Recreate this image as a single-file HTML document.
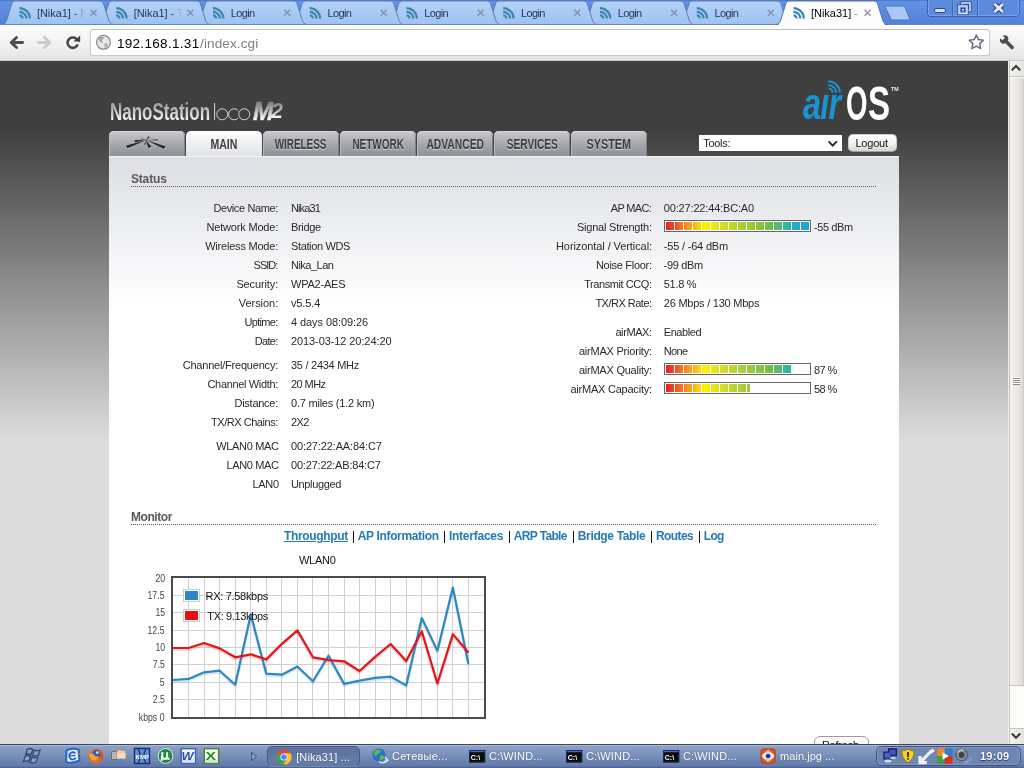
<!DOCTYPE html>
<html><head><meta charset="utf-8"><title>[Nika31] - Main</title>
<style>
*{margin:0;padding:0;box-sizing:border-box}
html,body{width:1024px;height:768px;overflow:hidden;background:#dcdcdc;font-family:"Liberation Sans",sans-serif;font-size:11px;color:#222}
.t{position:absolute;white-space:nowrap;line-height:20px;height:20px;font-family:"Liberation Sans",sans-serif}
#pc,#chromewrap,#taskwrap{will-change:transform}
.dot{position:absolute;height:1px;background:repeating-linear-gradient(90deg,#5a5a5a 0,#5a5a5a 1px,transparent 1px,transparent 2px)}
.navt{position:absolute;height:17px;line-height:17px;text-align:center;font-size:14px;font-weight:bold;color:#3d3d40;text-shadow:0 1px 0 rgba(255,255,255,.55);white-space:nowrap}
#page{position:absolute;left:0;top:61px;width:1008px;height:683px;overflow:hidden}
#pc{position:absolute;left:0;top:-61px;width:1008px;height:768px;background:linear-gradient(#3f3f3f 0,#3f3f3f 130px,#dcdcdc 440px,#dcdcdc 100%)}
</style></head><body>
<div id="page"><div id="pc">
<div style="position:absolute;left:109px;top:156px;width:790px;height:640px;background:linear-gradient(#dee0e5,#dfe1e6 12px,#ffffff 148px,#ffffff)"></div>
<div style="position:absolute;left:109px;top:131px;width:76px;height:25px;border-radius:5px 5px 0 0;background:linear-gradient(#c9cacc,#b4b6ba 30%,#9fa2a8 65%,#8e9299);box-shadow:inset 0 1px 0 #d4d5d7,inset -1px 0 0 #7e8187,inset 1px 0 0 #b9bbbf"></div>
<div style="position:absolute;left:186px;top:131px;width:76px;height:26px;border-radius:5px 5px 0 0;background:linear-gradient(#ffffff,#f4f5f7 30%,#dfe1e6)"></div>
<div class="navt" style="left:164.15px;top:136px;width:120px"><span style="display:inline-block;transform:scaleX(0.754);">MAIN</span></div>
<div style="position:absolute;left:263px;top:131px;width:76px;height:25px;border-radius:5px 5px 0 0;background:linear-gradient(#c9cacc,#b4b6ba 30%,#9fa2a8 65%,#8e9299);box-shadow:inset 0 1px 0 #d4d5d7,inset -1px 0 0 #7e8187,inset 1px 0 0 #b9bbbf"></div>
<div class="navt" style="left:240.75px;top:136px;width:120px"><span style="display:inline-block;transform:scaleX(0.708);">WIRELESS</span></div>
<div style="position:absolute;left:340px;top:131px;width:76px;height:25px;border-radius:5px 5px 0 0;background:linear-gradient(#c9cacc,#b4b6ba 30%,#9fa2a8 65%,#8e9299);box-shadow:inset 0 1px 0 #d4d5d7,inset -1px 0 0 #7e8187,inset 1px 0 0 #b9bbbf"></div>
<div class="navt" style="left:318.25px;top:136px;width:120px"><span style="display:inline-block;transform:scaleX(0.713);">NETWORK</span></div>
<div style="position:absolute;left:417px;top:131px;width:76px;height:25px;border-radius:5px 5px 0 0;background:linear-gradient(#c9cacc,#b4b6ba 30%,#9fa2a8 65%,#8e9299);box-shadow:inset 0 1px 0 #d4d5d7,inset -1px 0 0 #7e8187,inset 1px 0 0 #b9bbbf"></div>
<div class="navt" style="left:395.25px;top:136px;width:120px"><span style="display:inline-block;transform:scaleX(0.735);">ADVANCED</span></div>
<div style="position:absolute;left:494px;top:131px;width:76px;height:25px;border-radius:5px 5px 0 0;background:linear-gradient(#c9cacc,#b4b6ba 30%,#9fa2a8 65%,#8e9299);box-shadow:inset 0 1px 0 #d4d5d7,inset -1px 0 0 #7e8187,inset 1px 0 0 #b9bbbf"></div>
<div class="navt" style="left:472.00px;top:136px;width:120px"><span style="display:inline-block;transform:scaleX(0.726);">SERVICES</span></div>
<div style="position:absolute;left:571px;top:131px;width:76px;height:25px;border-radius:5px 5px 0 0;background:linear-gradient(#c9cacc,#b4b6ba 30%,#9fa2a8 65%,#8e9299);box-shadow:inset 0 1px 0 #d4d5d7,inset -1px 0 0 #7e8187,inset 1px 0 0 #b9bbbf"></div>
<div class="navt" style="left:549.15px;top:136px;width:120px"><span style="display:inline-block;transform:scaleX(0.771);">SYSTEM</span></div>
<svg style="position:absolute;left:124px;top:134px" width="44" height="18" viewBox="0 0 44 18">
<g fill="#e9eaec" opacity="0.9"><polygon points="1.6,13.6 4.4,14.6 6.5,13.4 3,13.2"/><polygon points="38.5,14 41.8,14.6 42,13.4"/><polygon points="24.6,13.6 27.6,13.9 27.4,12.9"/></g>
<g fill="#232325"><polygon points="23,5.800 2,11.800 3.400,14.200"/><polygon points="21.600,5.800 41.600,12.400 40,14.700"/>
<polygon points="22.400,5.400 10.400,6.200 11,8.200"/><polygon points="21.2,10.8 20,10.4 22.3,6.2"/><polygon points="21.800,6 24.300,13.700 27.600,13"/><polygon points="22,6.3 24.3,2.3 25.6,3.2"/></g>
<g fill="#5e6064"><polygon points="22,5.9 34,4.9 34.2,6.7"/><polygon points="22.3,6.2 17,3.8 17.3,5.200"/></g></svg>
<div style="position:absolute;left:109px;top:156px;width:790px;height:1px;background:#f4f5f7"></div>
<div style="position:absolute;left:110px;top:97px;height:30px;line-height:30px;font-size:24px;font-weight:bold;white-space:nowrap;transform-origin:0 0;transform:scaleX(.708);background:linear-gradient(#9c9c9c 22%,#ffffff 82%);-webkit-background-clip:text;background-clip:text;color:transparent">NanoStation</div>
<svg style="position:absolute;left:212px;top:100px" width="42" height="24" viewBox="0 0 42 24"><g fill="none" stroke="#e4e4e4" stroke-width="0.9"><line x1="2.6" y1="3" x2="2.6" y2="20"/><circle cx="10.3" cy="14.3" r="5.5"/><path d="M26.2,10.6 A5.5,5.5 0 1 0 26.2,18"/><circle cx="32.3" cy="14.3" r="5.5"/></g></svg>
<div style="position:absolute;left:253px;top:96px;height:30px;line-height:30px;font-size:25px;font-weight:bold;font-style:italic;white-space:nowrap;transform-origin:0 0;transform:scaleX(.98);background:linear-gradient(#858585 25%,#ffffff 80%);-webkit-background-clip:text;background-clip:text;color:transparent;-webkit-text-stroke:0.6px transparent">M</div>
<div style="position:absolute;left:271.200px;top:95.500px;height:30px;line-height:30px;font-size:22.5px;font-weight:bold;font-style:italic;white-space:nowrap;transform-origin:0 0;transform:scaleX(.96);background:linear-gradient(#858585 25%,#f4f4f4 72%);-webkit-background-clip:text;background-clip:text;color:transparent">2</div>
<div style="position:absolute;left:803px;top:76px;height:56px;line-height:56px;font-size:45px;font-weight:bold;font-style:italic;white-space:nowrap;transform-origin:0 0;transform:scaleX(.72);color:#1b93d1;letter-spacing:-1px">a&#305;r</div>
<div style="position:absolute;left:845.6px;top:76px;height:56px;line-height:56px;font-size:48px;font-weight:bold;white-space:nowrap;transform-origin:0 0;transform:scaleX(.575);color:#ffffff">O</div>
<div style="position:absolute;left:868px;top:76px;height:56px;line-height:56px;font-size:48px;font-weight:bold;white-space:nowrap;transform-origin:0 0;transform:scaleX(.69);color:#ffffff">S</div>
<div style="position:absolute;left:891px;top:86px;font-size:5px;line-height:6px;font-weight:bold;color:#eee;transform-origin:0 0;transform:scaleX(1.05)">TM</div>
<svg style="position:absolute;left:824px;top:78px" width="20" height="18" viewBox="0 0 20 18"><g fill="none" stroke="#1b93d1" stroke-width="2"><path d="M4.5,10.6 A4.2,4.2 0 0 1 8.6,14.6"/><path d="M4.3,6.9 A8,8 0 0 1 12.2,14.6"/><path d="M4.2,3.2 A11.6,11.6 0 0 1 15.8,14.4"/></g></svg>
<div style="position:absolute;left:698px;top:134px;width:145px;height:18px;background:#fff;border:1px solid #4a4a4a"></div>
<span class="t" style="left:703.30px;top:133px;font-size:11px;color:#222;letter-spacing:-0.316px;">Tools:</span>
<svg style="position:absolute;left:826px;top:138px" width="14" height="12" viewBox="0 0 14 12"><path d="M2.6,3.4 L6.7,7.6 L10.8,3.4" fill="none" stroke="#2a2a2a" stroke-width="2"/></svg>
<div style="position:absolute;left:848px;top:134px;width:49px;height:18px;border-radius:5px;border:1px solid #cfcdc7;border-bottom-color:#a5a29b;background:linear-gradient(#ffffff,#f4f3f0 50%,#d9d6cf)"></div>
<span class="t" style="left:855.40px;top:133px;font-size:11px;color:#111;letter-spacing:-0.198px;">Logout</span>
<span class="t" style="left:130.90px;top:169px;font-size:12px;color:#57575c;letter-spacing:-0.140px;font-weight:700;">Status</span>
<div class="dot" style="left:131px;top:186px;width:746px"></div>
<span class="t" style="left:130.90px;top:507px;font-size:12px;color:#57575c;letter-spacing:-0.419px;font-weight:700;">Monitor</span>
<div class="dot" style="left:131px;top:524px;width:746px"></div>
<span class="t" style="left:213.40px;top:198px;font-size:11px;color:#2a2a2a;letter-spacing:-0.384px;">Device Name:</span>
<span class="t" style="left:291.00px;top:198px;font-size:11px;color:#2a2a2a;letter-spacing:-0.885px;">Nika31</span>
<span class="t" style="left:206.50px;top:217px;font-size:11px;color:#2a2a2a;letter-spacing:-0.185px;">Network Mode:</span>
<span class="t" style="left:291.00px;top:217px;font-size:11px;color:#2a2a2a;letter-spacing:-0.316px;">Bridge</span>
<span class="t" style="left:205.20px;top:236px;font-size:11px;color:#2a2a2a;letter-spacing:-0.211px;">Wireless Mode:</span>
<span class="t" style="left:291.00px;top:236px;font-size:11px;color:#2a2a2a;letter-spacing:-0.363px;">Station WDS</span>
<span class="t" style="left:253.60px;top:255px;font-size:11px;color:#2a2a2a;letter-spacing:-1.018px;">SSID:</span>
<span class="t" style="left:291.00px;top:255px;font-size:11px;color:#2a2a2a;letter-spacing:-0.508px;">Nika_Lan</span>
<span class="t" style="left:236.40px;top:274px;font-size:11px;color:#2a2a2a;letter-spacing:-0.117px;">Security:</span>
<span class="t" style="left:291.00px;top:274px;font-size:11px;color:#2a2a2a;letter-spacing:-0.213px;">WPA2-AES</span>
<span class="t" style="left:238.75px;top:293px;font-size:11px;color:#2a2a2a;letter-spacing:-0.034px;">Version:</span>
<span class="t" style="left:291.00px;top:293px;font-size:11px;color:#2a2a2a;letter-spacing:-0.130px;">v5.5.4</span>
<span class="t" style="left:244.60px;top:312px;font-size:11px;color:#2a2a2a;letter-spacing:-0.707px;">Uptime:</span>
<span class="t" style="left:291.00px;top:312px;font-size:11px;color:#2a2a2a;letter-spacing:-0.083px;">4 days 08:09:26</span>
<span class="t" style="left:254.80px;top:331px;font-size:11px;color:#2a2a2a;letter-spacing:-0.709px;">Date:</span>
<span class="t" style="left:291.00px;top:331px;font-size:11px;color:#2a2a2a;letter-spacing:-0.090px;">2013-03-12 20:24:20</span>
<span class="t" style="left:182.70px;top:355px;font-size:11px;color:#2a2a2a;letter-spacing:-0.206px;">Channel/Frequency:</span>
<span class="t" style="left:291.00px;top:355px;font-size:11px;color:#2a2a2a;letter-spacing:-0.270px;">35 / 2434 MHz</span>
<span class="t" style="left:207.50px;top:374px;font-size:11px;color:#2a2a2a;letter-spacing:-0.342px;">Channel Width:</span>
<span class="t" style="left:291.00px;top:374px;font-size:11px;color:#2a2a2a;letter-spacing:-0.560px;">20 MHz</span>
<span class="t" style="left:234.50px;top:393px;font-size:11px;color:#2a2a2a;letter-spacing:-0.262px;">Distance:</span>
<span class="t" style="left:291.00px;top:393px;font-size:11px;color:#2a2a2a;letter-spacing:-0.220px;">0.7 miles (1.2 km)</span>
<span class="t" style="left:211.00px;top:412px;font-size:11px;color:#2a2a2a;letter-spacing:-0.457px;">TX/RX Chains:</span>
<span class="t" style="left:291.00px;top:412px;font-size:11px;color:#2a2a2a;letter-spacing:-0.627px;">2X2</span>
<span class="t" style="left:216.30px;top:436px;font-size:11px;color:#2a2a2a;letter-spacing:-0.344px;">WLAN0 MAC</span>
<span class="t" style="left:291.00px;top:436px;font-size:11px;color:#2a2a2a;letter-spacing:-0.134px;">00:27:22:AA:84:C7</span>
<span class="t" style="left:226.60px;top:455px;font-size:11px;color:#2a2a2a;letter-spacing:-0.382px;">LAN0 MAC</span>
<span class="t" style="left:291.00px;top:455px;font-size:11px;color:#2a2a2a;letter-spacing:-0.196px;">00:27:22:AB:84:C7</span>
<span class="t" style="left:252.40px;top:474px;font-size:11px;color:#2a2a2a;letter-spacing:-0.266px;">LAN0</span>
<span class="t" style="left:291.00px;top:474px;font-size:11px;color:#2a2a2a;letter-spacing:-0.355px;">Unplugged</span>
<span class="t" style="left:610.70px;top:198px;font-size:11px;color:#2a2a2a;letter-spacing:-0.646px;">AP MAC:</span>
<span class="t" style="left:663.80px;top:198px;font-size:11px;color:#2a2a2a;letter-spacing:-0.165px;">00:27:22:44:BC:A0</span>
<span class="t" style="left:576.90px;top:217px;font-size:11px;color:#2a2a2a;letter-spacing:-0.208px;">Signal Strength:</span>
<span class="t" style="left:556.00px;top:236px;font-size:11px;color:#2a2a2a;letter-spacing:-0.084px;">Horizontal / Vertical:</span>
<span class="t" style="left:663.80px;top:236px;font-size:11px;color:#2a2a2a;letter-spacing:-0.190px;">-55 / -64 dBm</span>
<span class="t" style="left:595.90px;top:255px;font-size:11px;color:#2a2a2a;letter-spacing:-0.286px;">Noise Floor:</span>
<span class="t" style="left:663.80px;top:255px;font-size:11px;color:#2a2a2a;letter-spacing:-0.368px;">-99 dBm</span>
<span class="t" style="left:584.15px;top:274px;font-size:11px;color:#2a2a2a;letter-spacing:-0.419px;">Transmit CCQ:</span>
<span class="t" style="left:663.80px;top:274px;font-size:11px;color:#2a2a2a;letter-spacing:-0.313px;">51.8 %</span>
<span class="t" style="left:595.40px;top:293px;font-size:11px;color:#2a2a2a;letter-spacing:-0.508px;">TX/RX Rate:</span>
<span class="t" style="left:663.80px;top:293px;font-size:11px;color:#2a2a2a;letter-spacing:-0.233px;">26 Mbps / 130 Mbps</span>
<span class="t" style="left:615.40px;top:322px;font-size:11px;color:#2a2a2a;letter-spacing:-0.410px;">airMAX:</span>
<span class="t" style="left:663.80px;top:322px;font-size:11px;color:#2a2a2a;letter-spacing:-0.442px;">Enabled</span>
<span class="t" style="left:578.90px;top:341px;font-size:11px;color:#2a2a2a;letter-spacing:-0.216px;">airMAX Priority:</span>
<span class="t" style="left:663.80px;top:341px;font-size:11px;color:#2a2a2a;letter-spacing:-0.660px;">None</span>
<span class="t" style="left:578.90px;top:360px;font-size:11px;color:#2a2a2a;letter-spacing:-0.232px;">airMAX Quality:</span>
<span class="t" style="left:570.40px;top:379px;font-size:11px;color:#2a2a2a;letter-spacing:-0.221px;">airMAX Capacity:</span>
<span class="t" style="left:814.00px;top:217px;font-size:11px;color:#2a2a2a;letter-spacing:-0.402px;">-55 dBm</span>
<span class="t" style="left:814.00px;top:360px;font-size:11px;color:#2a2a2a;letter-spacing:-0.631px;">87 %</span>
<span class="t" style="left:814.00px;top:379px;font-size:11px;color:#2a2a2a;letter-spacing:-0.631px;">58 %</span>
<div style="position:absolute;left:664px;top:220px;width:147px;height:12px;border:1px solid #666;background:#fff"><div style="position:absolute;left:1px;top:1px;width:144px;height:8px;background:linear-gradient(90deg,#ee1c25 0,#f04e23 9px,#f58220 18px,#fcb316 28px,#fff200 38px,#e4e61c 50px,#cbdb2a 60px,#a8cf38 76px,#8bc53f 92px,#6fbe44 104px,#4db97f 115px,#2bb4ae 124px,#1faacf 133px,#1da0dc 144px);background-size:144px 8px;background-repeat:no-repeat"></div><div style="position:absolute;left:1px;top:1px;width:144px;height:8px;background:repeating-linear-gradient(90deg,transparent 0,transparent 8px,#fff 8px,#fff 9px)"></div></div>
<div style="position:absolute;left:664px;top:363px;width:147px;height:12px;border:1px solid #666;background:#fff"><div style="position:absolute;left:1px;top:1px;width:125px;height:8px;background:linear-gradient(90deg,#ee1c25 0,#f04e23 9px,#f58220 18px,#fcb316 28px,#fff200 38px,#e4e61c 50px,#cbdb2a 60px,#a8cf38 76px,#8bc53f 92px,#6fbe44 104px,#4db97f 115px,#2bb4ae 124px,#1faacf 133px,#1da0dc 144px);background-size:144px 8px;background-repeat:no-repeat"></div><div style="position:absolute;left:1px;top:1px;width:144px;height:8px;background:repeating-linear-gradient(90deg,transparent 0,transparent 8px,#fff 8px,#fff 9px)"></div></div>
<div style="position:absolute;left:664px;top:382px;width:147px;height:12px;border:1px solid #666;background:#fff"><div style="position:absolute;left:1px;top:1px;width:84px;height:8px;background:linear-gradient(90deg,#ee1c25 0,#f04e23 9px,#f58220 18px,#fcb316 28px,#fff200 38px,#e4e61c 50px,#cbdb2a 60px,#a8cf38 76px,#8bc53f 92px,#6fbe44 104px,#4db97f 115px,#2bb4ae 124px,#1faacf 133px,#1da0dc 144px);background-size:144px 8px;background-repeat:no-repeat"></div><div style="position:absolute;left:1px;top:1px;width:144px;height:8px;background:repeating-linear-gradient(90deg,transparent 0,transparent 8px,#fff 8px,#fff 9px)"></div></div>
<span class="t" style="left:283.90px;top:526px;font-size:12px;color:#257ab4;letter-spacing:-0.335px;font-weight:700;text-decoration:underline;">Throughput</span>
<span class="t" style="left:357.80px;top:526px;font-size:12px;color:#257ab4;letter-spacing:-0.351px;font-weight:700;">AP Information</span>
<span class="t" style="left:448.90px;top:526px;font-size:12px;color:#257ab4;letter-spacing:-0.236px;font-weight:700;">Interfaces</span>
<span class="t" style="left:513.80px;top:526px;font-size:12px;color:#257ab4;letter-spacing:-0.656px;font-weight:700;">ARP Table</span>
<span class="t" style="left:577.80px;top:526px;font-size:12px;color:#257ab4;letter-spacing:-0.356px;font-weight:700;">Bridge Table</span>
<span class="t" style="left:656.00px;top:526px;font-size:12px;color:#257ab4;letter-spacing:-0.599px;font-weight:700;">Routes</span>
<span class="t" style="left:703.80px;top:526px;font-size:12px;color:#257ab4;letter-spacing:-0.730px;font-weight:700;">Log</span>
<div style="position:absolute;left:352.8px;top:531px;width:1px;height:12px;background:#111"></div>
<div style="position:absolute;left:443.8px;top:531px;width:1px;height:12px;background:#111"></div>
<div style="position:absolute;left:508.8px;top:531px;width:1px;height:12px;background:#111"></div>
<div style="position:absolute;left:572.8px;top:531px;width:1px;height:12px;background:#111"></div>
<div style="position:absolute;left:650.9px;top:531px;width:1px;height:12px;background:#111"></div>
<div style="position:absolute;left:698.5px;top:531px;width:1px;height:12px;background:#111"></div>
<svg style="position:absolute;left:0;top:0" width="1008" height="768" viewBox="0 0 1008 768">
<rect x="171" y="576" width="315" height="142" fill="#fff"/>
<path d="M188.5,578V717M204.5,578V717M219.5,578V717M235.5,578V717M250.5,578V717M266.5,578V717M281.5,578V717M297.5,578V717M312.5,578V717M328.5,578V717M344.5,578V717M359.5,578V717M375.5,578V717M390.5,578V717M406.5,578V717M421.5,578V717M437.5,578V717M452.5,578V717M468.5,578V717M173,595.5H484M173,612.5H484M173,630.5H484M173,647.5H484M173,664.5H484M173,682.5H484M173,699.5H484" stroke="#d0d0d0" stroke-width="1" fill="none"/>
<polyline points="173.0,681.5 188.6,680.4 204.1,673.8 219.7,672.2 235.2,686.2 250.8,615.9 266.3,675.2 281.9,676.2 297.4,668.0 313.0,682.7 328.5,657.1 344.1,685.4 359.6,682.1 375.1,679.4 390.7,678.1 406.2,686.9 421.8,619.5 437.4,652.2 452.9,589.1 468.4,665.5" fill="none" stroke="#2f87c2" stroke-opacity="0.18" stroke-width="3" stroke-linejoin="round"/>
<polyline points="173.0,649.5 188.6,649.5 204.1,644.5 219.7,649.9 235.2,658.8 250.8,655.8 266.3,660.9 281.9,645.2 297.4,631.9 313.0,658.8 328.5,661.7 344.1,662.8 359.6,672.5 375.1,658.4 390.7,645.5 406.2,662.6 421.8,632.7 437.4,685.0 452.9,635.6 468.4,654.0" fill="none" stroke="#e1151b" stroke-opacity="0.18" stroke-width="3" stroke-linejoin="round"/>
<polyline points="173.0,680.0 188.6,678.9 204.1,672.3 219.7,670.7 235.2,684.8 250.8,614.4 266.3,673.7 281.9,674.7 297.4,666.5 313.0,681.2 328.5,655.6 344.1,683.9 359.6,680.6 375.1,677.9 390.7,676.6 406.2,685.4 421.8,618.0 437.4,650.7 452.9,587.6 468.4,664.0" fill="none" stroke="#2f87c2" stroke-width="2.2" stroke-linejoin="round"/>
<polyline points="173.0,648.0 188.6,648.0 204.1,643.0 219.7,648.4 235.2,657.3 250.8,654.3 266.3,659.4 281.9,643.8 297.4,630.4 313.0,657.3 328.5,660.2 344.1,661.3 359.6,671.0 375.1,656.9 390.7,644.0 406.2,661.1 421.8,631.2 437.4,683.5 452.9,634.1 468.4,652.5" fill="none" stroke="#e1151b" stroke-width="2.2" stroke-linejoin="round"/>
<rect x="172" y="577" width="313" height="141" fill="none" stroke="#4a4a4a" stroke-width="2"/>
<rect x="183.5" y="589.5" width="16" height="12" fill="#fff" stroke="#ccc"/><rect x="185" y="591" width="13" height="9" fill="#2f87c2"/>
<rect x="183.5" y="609.5" width="16" height="12" fill="#fff" stroke="#ccc"/><rect x="185" y="611" width="13" height="9" fill="#ee0d0d"/>
</svg>
<span class="t" style="left:205.60px;top:586px;font-size:11px;color:#111;letter-spacing:-0.313px;">RX: 7.58kbps</span>
<span class="t" style="left:207.30px;top:606px;font-size:11px;color:#111;letter-spacing:-0.356px;">TX: 9.13kbps</span>
<span class="t" style="left:298.90px;top:550px;font-size:11px;color:#111;letter-spacing:-0.220px;">WLAN0</span>
<span class="t" style="right:843.2px;top:569px;font-size:10px;color:#444;transform:scaleX(.87);transform-origin:100% 50%">20</span>
<span class="t" style="right:843.2px;top:586px;font-size:10px;color:#444;transform:scaleX(.87);transform-origin:100% 50%">17.5</span>
<span class="t" style="right:843.2px;top:603px;font-size:10px;color:#444;transform:scaleX(.87);transform-origin:100% 50%">15</span>
<span class="t" style="right:843.2px;top:621px;font-size:10px;color:#444;transform:scaleX(.87);transform-origin:100% 50%">12.5</span>
<span class="t" style="right:843.2px;top:638px;font-size:10px;color:#444;transform:scaleX(.87);transform-origin:100% 50%">10</span>
<span class="t" style="right:843.2px;top:655px;font-size:10px;color:#444;transform:scaleX(.87);transform-origin:100% 50%">7.5</span>
<span class="t" style="right:843.2px;top:673px;font-size:10px;color:#444;transform:scaleX(.87);transform-origin:100% 50%">5</span>
<span class="t" style="right:843.2px;top:690px;font-size:10px;color:#444;transform:scaleX(.87);transform-origin:100% 50%">2.5</span>
<span class="t" style="right:843.2px;top:708px;font-size:10px;color:#444;transform:scaleX(.87);transform-origin:100% 50%">kbps 0</span>
<div style="position:absolute;left:814px;top:736px;width:55px;height:20px;border-radius:6px;border:1px solid #9c9c9c;background:linear-gradient(#fdfdfc,#ecebe8)"></div>
<span class="t" style="left:821.90px;top:735px;font-size:11px;color:#111;letter-spacing:-0.216px;">Refresh</span>
</div></div>
<div style="position:absolute;left:1008px;top:61px;width:16px;height:683px;background:#fbfbfa"></div>
<div style="position:absolute;left:1008px;top:61px;width:1px;height:683px;background:#f1f1f0"></div>
<div style="position:absolute;left:1009px;top:61px;width:1px;height:683px;background:#c4c1bc"></div>
<div style="position:absolute;left:1010px;top:61px;width:14px;height:16px;background:linear-gradient(90deg,#f4f3f0,#e6e4df);border-bottom:1px solid #c6c3bd"></div>
<div style="position:absolute;left:1010px;top:78px;width:14px;height:608px;background:linear-gradient(90deg,#f6f4f1,#ebe9e5 50%,#dedbd6);border-bottom:1px solid #c6c3bd;border-right:1px solid #cfccc6"></div>
<div style="position:absolute;left:1010px;top:728px;width:14px;height:16px;background:linear-gradient(90deg,#f4f3f0,#e6e4df);border-top:1px solid #c6c3bd"></div>
<svg style="position:absolute;left:1008px;top:61px" width="16" height="683" viewBox="0 0 16 683"><path d="M3.800,9.200 L8,5 L12.200,9.200 M3.800,672.500 L8,676.700 L12.200,672.500" fill="none" stroke="#3e3e3e" stroke-width="2.200"/><path d="M5,317.500H12M5,319.500H12M5,321.500H12M5,323.500H12" stroke="#8c8984" stroke-width="1"/><path d="M5,316.500H12M5,318.500H12M5,320.500H12M5,322.500H12" stroke="#ffffff" stroke-width="1"/></svg>
<div id="chromewrap" style="position:absolute;left:0;top:0;width:1024px;height:61px">
<svg style="position:absolute;left:0;top:0" width="1024" height="26" viewBox="0 0 1024 26">
<defs><linearGradient id="fr" x1="0" y1="0" x2="0" y2="1"><stop offset="0" stop-color="#446fc4"/><stop offset="0.06" stop-color="#6092e5"/><stop offset="1" stop-color="#5281d7"/></linearGradient><linearGradient id="ti" x1="0" y1="0" x2="0" y2="1"><stop offset="0" stop-color="#b4d2f9"/><stop offset="1" stop-color="#9fc2f0"/></linearGradient><linearGradient id="ta" x1="0" y1="0" x2="0" y2="1"><stop offset="0" stop-color="#ffffff"/><stop offset="1" stop-color="#fbfcfd"/></linearGradient><linearGradient id="fade" x1="0" y1="0" x2="1" y2="0"><stop offset="0" stop-color="#a9caf4" stop-opacity="0"/><stop offset="1" stop-color="#a9caf4"/></linearGradient></defs>
<rect x="0" y="0" width="1024" height="26" fill="url(#fr)"/>
<rect x="0" y="24" width="1024" height="1" fill="#6f92cf"/>
<path d="M678.95,24.5 C681.95,24.5 683.0500000000001,22.5 684.0500000000001,20 L688.95,4 C689.6500000000001,2 690.75,1 692.95,1 L776.95,1 C779.1500000000001,1 780.25,2 780.95,4 L785.85,20 C786.85,22.5 787.95,24.5 790.95,24.5 Z" fill="url(#ti)" stroke="#5f7fb5" stroke-width="1"/>
<path d="M582.2,24.5 C585.2,24.5 586.3000000000001,22.5 587.3000000000001,20 L592.2,4 C592.9000000000001,2 594.0,1 596.2,1 L680.2,1 C682.4000000000001,1 683.5,2 684.2,4 L689.1,20 C690.1,22.5 691.2,24.5 694.2,24.5 Z" fill="url(#ti)" stroke="#5f7fb5" stroke-width="1"/>
<path d="M485.45,24.5 C488.45,24.5 489.55,22.5 490.55,20 L495.45,4 C496.15,2 497.25,1 499.45,1 L583.45,1 C585.65,1 586.75,2 587.45,4 L592.35,20 C593.35,22.5 594.45,24.5 597.45,24.5 Z" fill="url(#ti)" stroke="#5f7fb5" stroke-width="1"/>
<path d="M388.7,24.5 C391.7,24.5 392.8,22.5 393.8,20 L398.7,4 C399.4,2 400.5,1 402.7,1 L486.7,1 C488.9,1 490.0,2 490.7,4 L495.6,20 C496.6,22.5 497.7,24.5 500.7,24.5 Z" fill="url(#ti)" stroke="#5f7fb5" stroke-width="1"/>
<path d="M291.95,24.5 C294.95,24.5 296.05,22.5 297.05,20 L301.95,4 C302.65,2 303.75,1 305.95,1 L389.95,1 C392.15,1 393.25,2 393.95,4 L398.85,20 C399.85,22.5 400.95,24.5 403.95,24.5 Z" fill="url(#ti)" stroke="#5f7fb5" stroke-width="1"/>
<path d="M195.2,24.5 C198.2,24.5 199.29999999999998,22.5 200.29999999999998,20 L205.2,4 C205.89999999999998,2 207.0,1 209.2,1 L293.2,1 C295.4,1 296.5,2 297.2,4 L302.1,20 C303.1,22.5 304.2,24.5 307.2,24.5 Z" fill="url(#ti)" stroke="#5f7fb5" stroke-width="1"/>
<path d="M98.45,24.5 C101.45,24.5 102.55,22.5 103.55,20 L108.45,4 C109.15,2 110.25,1 112.45,1 L196.45,1 C198.65,1 199.75,2 200.45,4 L205.35000000000002,20 C206.35000000000002,22.5 207.45,24.5 210.45,24.5 Z" fill="url(#ti)" stroke="#5f7fb5" stroke-width="1"/>
<path d="M1.7000000000000002,24.5 C4.7,24.5 5.800000000000001,22.5 6.800000000000001,20 L11.7,4 C12.399999999999999,2 13.5,1 15.7,1 L99.7,1 C101.9,1 103.0,2 103.7,4 L108.60000000000001,20 C109.60000000000001,22.5 110.7,24.5 113.7,24.5 Z" fill="url(#ti)" stroke="#5f7fb5" stroke-width="1"/>
<rect x="0" y="24" width="1024" height="1" fill="#6983b2"/>
<path d="M775.7,24.5 C778.7,24.5 779.8000000000001,22.5 780.8000000000001,20 L785.7,4 C786.4000000000001,2 787.5,1 789.7,1 L873.7,1 C875.9000000000001,1 877.0,2 877.7,4 L882.6,20 C883.6,22.5 884.7,24.5 887.7,24.5 Z" fill="url(#ta)" stroke="#5674a8" stroke-width="1"/>
<rect x="778.7" y="24" width="106" height="2" fill="#fdfdfe"/>
<g transform="translate(18.5,6.8)" fill="none" stroke="#3788b2" stroke-width="2.2"><path d="M1,8.6 A3.2,3.2 0 0 1 4.2,11.8"/><path d="M1,5 A6.8,6.8 0 0 1 7.8,11.8"/><path d="M1,1.3 A10.5,10.5 0 0 1 11.4,11.8"/></g>
<g transform="translate(115.25,6.8)" fill="none" stroke="#3788b2" stroke-width="2.2"><path d="M1,8.6 A3.2,3.2 0 0 1 4.2,11.8"/><path d="M1,5 A6.8,6.8 0 0 1 7.8,11.8"/><path d="M1,1.3 A10.5,10.5 0 0 1 11.4,11.8"/></g>
<g transform="translate(212.0,6.8)" fill="none" stroke="#3788b2" stroke-width="2.2"><path d="M1,8.6 A3.2,3.2 0 0 1 4.2,11.8"/><path d="M1,5 A6.8,6.8 0 0 1 7.8,11.8"/><path d="M1,1.3 A10.5,10.5 0 0 1 11.4,11.8"/></g>
<g transform="translate(308.75,6.8)" fill="none" stroke="#3788b2" stroke-width="2.2"><path d="M1,8.6 A3.2,3.2 0 0 1 4.2,11.8"/><path d="M1,5 A6.8,6.8 0 0 1 7.8,11.8"/><path d="M1,1.3 A10.5,10.5 0 0 1 11.4,11.8"/></g>
<g transform="translate(405.5,6.8)" fill="none" stroke="#3788b2" stroke-width="2.2"><path d="M1,8.6 A3.2,3.2 0 0 1 4.2,11.8"/><path d="M1,5 A6.8,6.8 0 0 1 7.8,11.8"/><path d="M1,1.3 A10.5,10.5 0 0 1 11.4,11.8"/></g>
<g transform="translate(502.25,6.8)" fill="none" stroke="#3788b2" stroke-width="2.2"><path d="M1,8.6 A3.2,3.2 0 0 1 4.2,11.8"/><path d="M1,5 A6.8,6.8 0 0 1 7.8,11.8"/><path d="M1,1.3 A10.5,10.5 0 0 1 11.4,11.8"/></g>
<g transform="translate(599.0,6.8)" fill="none" stroke="#3788b2" stroke-width="2.2"><path d="M1,8.6 A3.2,3.2 0 0 1 4.2,11.8"/><path d="M1,5 A6.8,6.8 0 0 1 7.8,11.8"/><path d="M1,1.3 A10.5,10.5 0 0 1 11.4,11.8"/></g>
<g transform="translate(695.75,6.8)" fill="none" stroke="#3788b2" stroke-width="2.2"><path d="M1,8.6 A3.2,3.2 0 0 1 4.2,11.8"/><path d="M1,5 A6.8,6.8 0 0 1 7.8,11.8"/><path d="M1,1.3 A10.5,10.5 0 0 1 11.4,11.8"/></g>
<g transform="translate(792.5,6.8)" fill="none" stroke="#3788b2" stroke-width="2.2"><path d="M1,8.6 A3.2,3.2 0 0 1 4.2,11.8"/><path d="M1,5 A6.8,6.8 0 0 1 7.8,11.8"/><path d="M1,1.3 A10.5,10.5 0 0 1 11.4,11.8"/></g>
<path d="M90.6,9.7L96.6,15.7M96.6,9.7L90.6,15.7" stroke="#8294b3" stroke-width="1.6" fill="none"/>
<path d="M187.35,9.7L193.35,15.7M193.35,9.7L187.35,15.7" stroke="#8294b3" stroke-width="1.6" fill="none"/>
<path d="M284.1,9.7L290.1,15.7M290.1,9.7L284.1,15.7" stroke="#8294b3" stroke-width="1.6" fill="none"/>
<path d="M380.85,9.7L386.85,15.7M386.85,9.7L380.85,15.7" stroke="#8294b3" stroke-width="1.6" fill="none"/>
<path d="M477.6,9.7L483.6,15.7M483.6,9.7L477.6,15.7" stroke="#8294b3" stroke-width="1.6" fill="none"/>
<path d="M574.35,9.7L580.35,15.7M580.35,9.7L574.35,15.7" stroke="#8294b3" stroke-width="1.6" fill="none"/>
<path d="M671.1,9.7L677.1,15.7M677.1,9.7L671.1,15.7" stroke="#8294b3" stroke-width="1.6" fill="none"/>
<path d="M767.85,9.7L773.85,15.7M773.85,9.7L767.85,15.7" stroke="#8294b3" stroke-width="1.6" fill="none"/>
<path d="M864.6,9.7L870.6,15.7M870.6,9.7L864.6,15.7" stroke="#9a9a9a" stroke-width="1.6" fill="none"/>
<path d="M886.5,6 L902.5,6 C904.5,6 905,7 905.6,8.5 L909.3,18 C909.8,19.5 909.3,20 907.8,20 L893.5,20 C891.5,20 891,19.3 890.4,17.8 L885.6,8 C885,6.6 885.3,6 886.5,6 Z" fill="#a9c9f5" stroke="#4a72bd" stroke-width="1"/>
<path d="M927.5,0 V13 C927.5,15.5 929,16.5 931,16.5 H1015 C1017.5,16.5 1019.5,15.5 1019.5,13 V0" fill="#5d8bdb" stroke="#3c63b0" stroke-width="1"/>
<path d="M928.5,0 V13 C928.5,14.8 929.5,15.5 931,15.5 H1015 C1017,15.5 1018.5,14.8 1018.5,13 V0" fill="none" stroke="#7fa6ea" stroke-width="1" opacity="0.8"/>
<path d="M952.5,0V16M977.5,0V16" stroke="#3c63b0" stroke-width="1"/><path d="M953.5,0V15.5M978.5,0V15.5" stroke="#7fa6ea" stroke-width="1" opacity="0.7"/>
<rect x="934.5" y="8.5" width="11" height="4" fill="#cfe0fa" stroke="#2c4a8a" stroke-width="1" rx="1.5"/>
<rect x="962" y="3" width="8" height="7.5" fill="none" stroke="#2c4a8a" stroke-width="3.2"/><rect x="962" y="3" width="8" height="7.5" fill="none" stroke="#dce8fb" stroke-width="1.5"/>
<rect x="959" y="6" width="8" height="7.5" fill="#5d8bdb" stroke="#2c4a8a" stroke-width="3.2"/><rect x="959" y="6" width="8" height="7.5" fill="#5d8bdb" stroke="#dce8fb" stroke-width="1.5"/><rect x="961.5" y="8.5" width="3" height="2.5" fill="#dce8fb" stroke="#2c4a8a" stroke-width="1"/>
<path d="M994.5,4 L1003,12 M1003,4 L994.5,12" stroke="#2c4a8a" stroke-width="5" fill="none"/><path d="M994.5,4 L1003,12 M1003,4 L994.5,12" stroke="#e6eefc" stroke-width="2.6" fill="none"/>
</svg>
<span class="t" style="left:36.90px;top:3px;font-size:11px;color:#1f3358;letter-spacing:-0.050px;width:49px;overflow:hidden;-webkit-mask-image:linear-gradient(90deg,#000 38px,transparent 48px);">[Nika1] - N</span>
<span class="t" style="left:133.65px;top:3px;font-size:11px;color:#1f3358;letter-spacing:-0.050px;width:49px;overflow:hidden;-webkit-mask-image:linear-gradient(90deg,#000 38px,transparent 48px);">[Nika1] - T</span>
<span class="t" style="left:230.75px;top:3px;font-size:11px;color:#1f3358;letter-spacing:-0.637px;">Login</span>
<span class="t" style="left:327.50px;top:3px;font-size:11px;color:#1f3358;letter-spacing:-0.637px;">Login</span>
<span class="t" style="left:424.25px;top:3px;font-size:11px;color:#1f3358;letter-spacing:-0.637px;">Login</span>
<span class="t" style="left:521.00px;top:3px;font-size:11px;color:#1f3358;letter-spacing:-0.637px;">Login</span>
<span class="t" style="left:617.75px;top:3px;font-size:11px;color:#1f3358;letter-spacing:-0.637px;">Login</span>
<span class="t" style="left:714.50px;top:3px;font-size:11px;color:#1f3358;letter-spacing:-0.637px;">Login</span>
<span class="t" style="left:810.90px;top:3px;font-size:11px;color:#000;width:50px;overflow:hidden;-webkit-mask-image:linear-gradient(90deg,#000 40px,transparent 50px);">[Nika31] -</span>
<div style="position:absolute;left:0;top:25px;width:1024px;height:36px;background:linear-gradient(#ffffff,#f7f7f8 25%,#ebecee 75%,#e1e2e4)"></div>
<div style="position:absolute;left:0;top:60px;width:1024px;height:1px;background:#cbcbcd"></div>
<div style="position:absolute;left:90px;top:29px;width:900px;height:27px;border-radius:3px;border:1px solid #c9cacc;border-top-color:#bfc0c3;background:#fff"></div>
<svg style="position:absolute;left:0;top:25px" width="1024" height="36" viewBox="0 0 1024 36">
<path d="M22.6,17.500 H12.500 M16.500,12.500 L11.200,17.500 L16.500,22.500" fill="none" stroke="#4d4d4d" stroke-width="2.900" stroke-linecap="round" stroke-linejoin="round"/>
<path d="M38.400,17.500 H48.500 M44.500,12.500 L49.800,17.500 L44.500,22.500" fill="none" stroke="#cbcbcb" stroke-width="2.900" stroke-linecap="round" stroke-linejoin="round"/>
<path d="M76.800,14.400 A5.200,5.200 0 1 0 77.700,19.300" fill="none" stroke="#474747" stroke-width="2.600"/>
<polygon points="73.400,16.200 80.200,17 80.200,10.400" fill="#474747"/>
<circle cx="103.5" cy="17.3" r="6.9" fill="#e9e9e9" stroke="#8b8b8b" stroke-width="1.3"/>
<path d="M99.2,12.8 C100.5,11.8 102.5,11.6 103.8,12 C104.5,13.2 103.2,14.2 102.2,14.8 C101.6,16 102.8,16.6 103.2,17.6 C102.2,18.6 101.2,17.6 100.2,16.8 C99,16.2 98.2,15 99.2,12.8 Z M104.5,18.6 C105.8,18 107.2,18.4 108,19.4 C107.6,21 106.4,22.4 105,22.8 C104.2,21.8 104.8,20.6 104.5,18.6 Z" fill="#a8a8a8"/>
<path d="M976.3,10 L978.4,14.6 L983.4,15.2 L979.7,18.6 L980.7,23.6 L976.3,21.1 L971.9,23.6 L972.9,18.6 L969.2,15.2 L974.2,14.6 Z" fill="#f7f9fc" stroke="#686d78" stroke-width="1.5" stroke-linejoin="round"/>
<g transform="translate(1007.2,17.6) rotate(-45)"><path d="M-2.2,-9.6 V-6.2 H2.2 V-9.6 C4.6,-8.8 6,-6.6 5.4,-4.2 C5,-2.6 3.8,-1.4 2.2,-0.9 V8.6 C2.2,11.4 -2.2,11.4 -2.2,8.6 V-0.9 C-3.8,-1.4 -5,-2.6 -5.4,-4.2 C-6,-6.6 -4.6,-8.8 -2.2,-9.6 Z" fill="#515151" transform="scale(0.82)"/></g>
</svg>
<span class="t" style="left:116.90px;top:34px;font-size:13.5px;color:#000;letter-spacing:0.317px;">192.168.1.31</span>
<span class="t" style="left:200.10px;top:34px;font-size:13.5px;color:#808080;letter-spacing:0.119px;">/index.cgi</span>
</div>
<div id="taskwrap" style="position:absolute;left:0;top:0;width:1024px;height:768px">
<div style="position:absolute;left:0;top:744px;width:1024px;height:24px;background:linear-gradient(#3b4664 0,#3b4664 1px,#a9bad6 1px,#a9bad6 2px,#8da2c4 2px,#7990b8 11px,#647dab 21px,#5b74a4 22.5px,#47598a 24px)"></div>
<svg style="position:absolute;left:0;top:0" width="1024" height="768" viewBox="0 0 1024 768">
<g transform="translate(24,748) skewX(-8)" fill="#8a9ec1" stroke="#34446d" stroke-width="1.25"><path d="M3.5,1.2 C5.5,0.2 7.5,0.4 9,1.4 L8,6.6 C6.5,5.8 4.5,5.6 2.6,6.6 Z"/><path d="M10.6,2 C12.4,3 14.4,3 16.4,2 L15.4,7.2 C13.4,8.2 11.4,8.2 9.6,7.2 Z"/><path d="M2.3,8.2 C4.2,7.2 6.2,7.4 7.7,8.4 L6.7,13.6 C5.2,12.8 3.2,12.6 1.3,13.6 Z"/><path d="M9.3,9 C11.1,10 13.1,10 15.1,9 L14.1,14.2 C12.1,15.2 10.1,15.2 8.3,14.2 Z"/></g>
<g transform="translate(65,748)"><path d="M1.5,2.500 C5,0.500 10,0.500 13.500,1.500 L14.500,12.500 C10,14.500 5,15.500 1,14 Z" fill="#eef4fd" stroke="#2a69cf" stroke-width="2.200"/><path d="M10.400,5.400 A3.600,3.600 0 1 0 10.800,9.800" fill="none" stroke="#2a62c8" stroke-width="1.800"/><path d="M4.500,7.600 H10.500" stroke="#2a62c8" stroke-width="1.400"/><circle cx="14.500" cy="5.500" r="1" fill="#d95a3a"/></g>
<g transform="translate(88,748)"><circle cx="8" cy="8" r="7.6" fill="#e8731c"/><circle cx="8.6" cy="6.2" r="4.6" fill="#2f5fc2"/><path d="M1.2,6 C3,4.5 5,5.5 6.2,7.2 C7.2,8.6 9.5,8.8 10.8,8 C10.5,11 8,12.6 5.4,12.2 C3,11.8 1.4,9.5 1.2,6 Z" fill="#f4a13a"/><path d="M9.2,1.2 C12,1.6 14.6,4 15.2,7 C15.8,10.4 13.6,14 10,15.2 C13,12.8 13.4,9 12.2,6.4 C11.4,4.4 10.4,2.6 9.2,1.2 Z" fill="#d9541a"/><circle cx="9.3" cy="4.6" r="1.3" fill="#f6e9c2"/></g>
<g transform="translate(111,748)"><rect x="0.5" y="3.5" width="6" height="8" rx="1" fill="#b9b9b9" stroke="#6d6d6d"/><path d="M5.5,4 C7,1.5 9,1 10.5,2.5 H14.5 V10.5 H5.5 Z" fill="#f1c9a2" stroke="#c08a55" stroke-width="0.8"/><rect x="6" y="5" width="8.5" height="5.5" fill="#f7dcc0"/><polygon points="6.5,11.5 12.5,11.5 9.5,15.5" fill="#2f8fe0"/></g>
<g transform="translate(134,748)"><rect x="0.500" y="0.5" width="15" height="15" fill="#5b8fd6" stroke="#15306f" stroke-width="1.4"/><path d="M4,1 C7,5 7,11 4,15 M12,1 C9,5 9,11 12,15" fill="none" stroke="#10245a" stroke-width="1.2"/><text x="1.6" y="10.6" font-family="Liberation Sans" font-weight="bold" font-size="6" fill="#fff">KMP</text></g>
<g transform="translate(157.5,748)"><circle cx="8" cy="8" r="7.7" fill="#e9f5ec"/><circle cx="8" cy="8" r="6.9" fill="#1c8c3e"/><path d="M5,4.2 L4.200,12.800 M5,8.600 C5,11.800 9.600,11.600 9.600,8.400 V4.200 M9.600,8.600 C9.600,10.800 10.600,11.200 12,10.600" fill="none" stroke="#fff" stroke-width="2"/></g>
<g transform="translate(180.500,748)"><rect x="0.7" y="0.7" width="14.300" height="14.600" fill="#f5f8ff" stroke="#3b5fc0" stroke-width="1.4"/><rect x="1.5" y="11" width="12.800" height="3.600" fill="#d5e0f7"/><text x="0" y="0" font-family="Liberation Sans" font-weight="bold" font-style="italic" font-size="10.500" fill="#2c4db0" transform="translate(1,11.500) scale(1.22,1)">W</text></g>
<g transform="translate(203.600,748)"><rect x="0.7" y="0.7" width="14.300" height="14.600" fill="#f4faef" stroke="#4f7f3c" stroke-width="1.4"/><rect x="1.5" y="11.500" width="12.800" height="3" fill="#d3e6cc"/><text x="0" y="0" font-family="Liberation Sans" font-weight="bold" font-size="10.500" fill="#2c8c2c" transform="translate(1.800,11.500) scale(1.5,1)">X</text></g>
<path d="M251.6,752.3 L256.6,756.5 L251.6,760.7 Z" fill="#8ea4c8" stroke="#3c4d7c" stroke-width="1"/>
<rect x="267.5" y="746.5" width="92" height="19" rx="4.5" fill="#647aa5" stroke="#475a86" stroke-width="1"/><path d="M270,766 H357" stroke="#8fa3c6" stroke-width="1" opacity="0.8"/>
<rect x="268.5" y="747.5" width="90" height="8" rx="4" fill="#5c719c" opacity="0.6"/>
<g transform="translate(284,757)"><circle r="7.6" fill="#dd4b3e"/><path d="M0,0 L-6.6,-3.8 A7.6,7.6 0 0 0 -0.4,7.6 L3.2,1.2 Z" fill="#3aa757"/><path d="M0,0 L3.4,1.2 L-0.4,7.6 A7.6,7.6 0 0 0 6.6,-3.8 L0,-3.8 Z" fill="#fbc32d"/><circle r="3.6" fill="#f3f6fb"/><circle r="2.8" fill="#4a8af4"/></g>
<g transform="translate(372,748)"><circle cx="7" cy="7" r="6.6" fill="#2d6fd0"/><path d="M3,3 C5,1 8,1.5 9,3.500 C8,5.500 6,5 5,7 C4,8.500 2,7.5 1.5,6 Z M8,8 C10,7 12,8 12.500,9.5 C11.5,11.500 9.500,12.500 8,12 Z" fill="#59c03a"/><path d="M7,13.500 C9,15.500 13,15 15.500,12.500 M13,9 L15.8,12.300 L12.500,13.800" fill="none" stroke="#dbe9ff" stroke-width="1.5"/></g>
<g transform="translate(469.2,750)"><rect x="0" y="0" width="16" height="12.5" fill="#0a0a0a"/><rect x="0" y="0" width="16" height="2.2" fill="#3a6fd0"/><rect x="0.5" y="0.5" width="15" height="11.5" fill="none" stroke="#1b2a55" stroke-width="1"/><text x="1.6" y="10" font-family="Liberation Sans" font-weight="bold" font-size="7" fill="#fff">C:\</text></g>
<g transform="translate(566.2,750)"><rect x="0" y="0" width="16" height="12.5" fill="#0a0a0a"/><rect x="0" y="0" width="16" height="2.2" fill="#3a6fd0"/><rect x="0.5" y="0.5" width="15" height="11.5" fill="none" stroke="#1b2a55" stroke-width="1"/><text x="1.6" y="10" font-family="Liberation Sans" font-weight="bold" font-size="7" fill="#fff">C:\</text></g>
<g transform="translate(663.2,750)"><rect x="0" y="0" width="16" height="12.5" fill="#0a0a0a"/><rect x="0" y="0" width="16" height="2.2" fill="#3a6fd0"/><rect x="0.5" y="0.5" width="15" height="11.5" fill="none" stroke="#1b2a55" stroke-width="1"/><text x="1.6" y="10" font-family="Liberation Sans" font-weight="bold" font-size="7" fill="#fff">C:\</text></g>
<g transform="translate(760.600,748.500)"><rect x="0.500" y="0.5" width="14" height="14" rx="2" fill="#e8542a" stroke="#b53518"/><polygon points="7.500,0.800 14.2,7.500 7.500,14.2 0.800,7.500" fill="#f5b27a"/><ellipse cx="7.500" cy="7.500" rx="5.800" ry="3.400" fill="#fdfdfd"/><circle cx="7.500" cy="7.500" r="2.600" fill="#2d5fb8"/><circle cx="7.500" cy="7.500" r="1.100" fill="#0c1c40"/></g>
<rect x="876.500" y="746.5" width="144" height="19" rx="5" fill="#6f86b2" stroke="#3f5180" stroke-width="1"/><rect x="877.500" y="747.5" width="142" height="17" rx="4" fill="none" stroke="#8ba0c6" stroke-width="1" opacity="0.7"/>
<g transform="translate(883,748)"><rect x="5.500" y="0.8" width="8" height="7" fill="#2b3a8c" stroke="#16205c"/><rect x="0.800" y="4" width="8" height="7" fill="#34449c" stroke="#16205c"/><rect x="2" y="5.200" width="5.600" height="4.400" fill="#4f63bd"/><rect x="6.700" y="2" width="5.600" height="4.400" fill="#4458b2"/><ellipse cx="5" cy="13" rx="3.500" ry="1.600" fill="#d6dcef"/><ellipse cx="10" cy="10" rx="3" ry="1.300" fill="#c5cce6"/></g>
<g transform="translate(901.5,748.500)"><path d="M6.500,0.500 C8.500,1.800 10.500,2.200 12.500,2.200 C12.800,7 11,11.500 6.500,14 C2,11.500 0.200,7 0.500,2.200 C2.500,2.200 4.500,1.800 6.500,0.500 Z" fill="#f5d21d" stroke="#8a7410" stroke-width="0.900"/><rect x="5.700" y="3.600" width="1.700" height="5" fill="#222"/><rect x="5.700" y="9.600" width="1.700" height="1.700" fill="#222"/></g>
<g transform="translate(919,748)"><path d="M10.500,2.800 L13.800,0.600 L15.800,3 L12.500,5.500 Z" fill="#f4f4f4" stroke="#c9c9c9" stroke-width="0.500"/><path d="M12.200,3.200 L1.200,14.400 M1,8 V14.600 H7.800" fill="none" stroke="#eef0f4" stroke-width="3.200"/></g>
<g transform="translate(937.3,748.400)"><rect x="0" y="0" width="7.500" height="7.500" fill="#f08a1c"/><rect x="7.500" y="0" width="7.700" height="7.500" fill="#2f7fd0"/><rect x="0" y="7.500" width="7.500" height="7.700" fill="#3f9f3a"/><rect x="7.500" y="7.500" width="7.700" height="7.700" fill="#d8301e"/><polygon points="5.200,3.800 11.400,7.600 5.200,11.400" fill="#fff"/></g>
<g transform="translate(955.6,748.400)"><circle cx="6" cy="6.500" r="5.800" fill="#8a8f98" stroke="#4d525c"/><circle cx="6" cy="6.500" r="3" fill="#3f434b"/><path d="M2.200,4 A5,5 0 0 1 8,1.700" stroke="#d9dde6" stroke-width="1.200" fill="none"/><path d="M9.500,13.500 C12,13.500 14.500,11.500 15.500,9" stroke="#9fb4ff" stroke-width="1" fill="none"/><path d="M8.500,15 C12,15.300 15.500,13 16.600,9.800" stroke="#9fb4ff" stroke-width="0.800" fill="none" opacity="0.700"/></g>
</svg>
<span class="t" style="left:296.20px;top:747px;font-size:11px;color:#ffffff;letter-spacing:0.098px;text-shadow:0 0 1px rgba(30,40,80,.5);">[Nika31] ...</span>
<span class="t" style="left:392.00px;top:746px;font-size:11px;color:#ffffff;letter-spacing:0.199px;text-shadow:0 0 1px rgba(30,40,80,.5);">Сетевые...</span>
<span class="t" style="left:488.90px;top:746px;font-size:11px;color:#ffffff;letter-spacing:0.134px;text-shadow:0 0 1px rgba(30,40,80,.5);">C:\WIND...</span>
<span class="t" style="left:585.90px;top:746px;font-size:11px;color:#ffffff;letter-spacing:0.134px;text-shadow:0 0 1px rgba(30,40,80,.5);">C:\WIND...</span>
<span class="t" style="left:682.90px;top:746px;font-size:11px;color:#ffffff;letter-spacing:0.134px;text-shadow:0 0 1px rgba(30,40,80,.5);">C:\WIND...</span>
<span class="t" style="left:780.00px;top:746px;font-size:11px;color:#ffffff;letter-spacing:0.059px;text-shadow:0 0 1px rgba(30,40,80,.5);">main.jpg ...</span>
<span class="t" style="left:980.00px;top:746px;font-size:11px;color:#ffffff;letter-spacing:0.246px;font-weight:700;text-shadow:0 1px 1px rgba(20,30,70,.7),0 0 1px rgba(20,30,70,.6);">19:09</span>
</div>
</body></html>
